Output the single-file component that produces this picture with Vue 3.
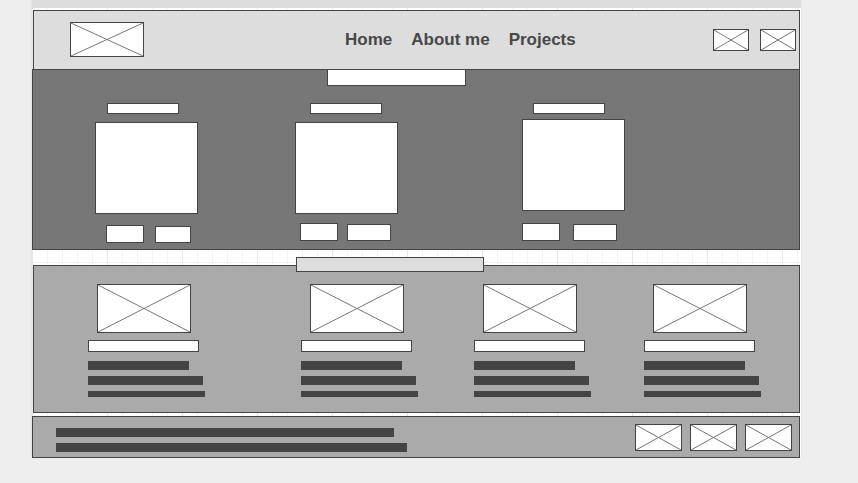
<script setup>
import { h } from 'vue'

const ImageBox = () =>
  h('svg', { viewBox: '0 0 100 100', preserveAspectRatio: 'none', 'aria-hidden': 'true' }, [
    h('path', {
      d: 'M0 0L100 100M0 100L100 0',
      fill: 'none',
      stroke: '#777',
      'stroke-width': 1,
      'vector-effect': 'non-scaling-stroke'
    })
  ])

const links = [
  { label: 'Home', href: '#home' },
  { label: 'About me', href: '#about' },
  { label: 'Projects', href: '#projects' }
]
const projects = ['first', 'second', 'third']
</script>

<template>
  <div class="page">
    <div class="strip"></div>

    <header id="home" class="header">
      <ImageBox class="image logo" />
      <nav class="nav">
        <a v-for="link in links" :key="link.label" :href="link.href">{{ link.label }}</a>
      </nav>
      <div class="social">
        <ImageBox v-for="n in 2" :key="n" class="image social-icon" />
      </div>
    </header>

    <main>
      <section id="projects" class="projects">
        <div class="projects-heading"><div class="projects-tab"></div></div>
        <div class="project-grid">
          <article v-for="name in projects" :key="name" class="project" :class="name">
            <div class="box project-name"></div>
            <div class="box project-preview"></div>
            <div class="actions">
              <button type="button" class="box action" aria-label="Demo"></button>
              <button type="button" class="box action secondary" aria-label="Code"></button>
            </div>
          </article>
        </div>
      </section>

      <section id="about" class="topics">
        <div class="topics-heading"><div class="topics-tab"></div></div>
        <div class="topic-grid">
          <article v-for="n in 4" :key="n" class="topic">
            <ImageBox class="image topic-image" />
            <div class="box topic-name"></div>
            <div class="line short"></div>
            <div class="line medium"></div>
            <div class="line long"></div>
          </article>
        </div>
      </section>
    </main>

    <footer class="footer">
      <div class="footer-text">
        <div class="line footer-first"></div>
        <div class="line footer-second"></div>
      </div>
      <div class="footer-icons">
        <ImageBox v-for="n in 3" :key="n" class="image footer-icon" />
      </div>
    </footer>
  </div>
</template>

<style>
body {
  background: #eee;
}
</style>

<style scoped>
.page,
.page * {
  box-sizing: border-box;
}

.page {
  margin: 0 57px 0 32px;
  padding-right: 1px;
  font-family: "Liberation Sans", Arial, sans-serif;
  background-color: #fff;
  background-image:
    repeating-linear-gradient(to right, #e8e8e8 0 1px, transparent 1px 75px),
    repeating-linear-gradient(to right, #f3f3f3 0 1px, transparent 1px 15px),
    repeating-linear-gradient(to bottom, transparent 0 7px, #f3f3f3 7px 8px, transparent 8px 15px);
  box-shadow: 0 0 2px #ddd;
}

.strip {
  height: 8px;
  margin: 0 -1px 2px 0;
  background: #ddd;
}

.box {
  border: 1px solid #444;
  background: #fff;
}

.image {
  display: block;
  border: 1px solid #444;
  background: #fff;
}

.header {
  display: grid;
  grid-template-columns: 275fr 368fr 83px;
  align-items: center;
  margin-left: 1px;
  padding: 11px 3px 12px 36px;
  border: 1px solid #444;
  border-bottom: 0;
  background: #ddd;
}

.logo {
  width: 74px;
  height: 35px;
}

.nav {
  display: flex;
  gap: 19px;
}

.nav a {
  color: #484848;
  font-size: 17px;
  font-weight: bold;
  line-height: 20px;
  text-decoration: none;
  white-space: nowrap;
}

.social {
  display: flex;
  gap: 11px;
}

.social-icon {
  width: 36px;
  height: 22px;
}

.projects {
  padding-bottom: 6px;
  border: 1px solid #444;
  background: #777;
}

.projects-heading {
  display: grid;
  grid-template-columns: 294fr 139px 333fr;
  margin-bottom: 17px;
}

.projects-tab {
  grid-column: 2;
  height: 16px;
  border: 1px solid #444;
  border-top: 0;
  background: #fff;
}

.project-grid {
  display: grid;
  grid-template-columns: 200fr 227fr 277fr;
  padding-left: 62px;
}

.project-name {
  width: 72px;
  height: 11px;
  margin: 0 0 8px 12px;
}

.project-preview {
  width: 103px;
  height: 92px;
}

.actions {
  display: flex;
  align-items: flex-end;
  gap: 11px;
  margin: 11px 0 0 11px;
}

.action {
  width: 38px;
  height: 18px;
  padding: 0;
  border-radius: 0;
}

.secondary {
  width: 44px;
  height: 17px;
}

.first .secondary {
  width: 36px;
}

.second .project-name {
  margin-left: 15px;
}

.second .actions {
  gap: 9px;
  margin: 9px 0 0 5px;
}

.third .project-name {
  margin: 0 0 5px 11px;
}

.third .actions {
  gap: 13px;
  margin: 12px 0 0;
}

.topics {
  margin: 15px 0 3px 1px;
  padding-bottom: 15px;
  border: 1px solid #444;
  background: #aaa;
}

.topics-heading {
  display: grid;
  grid-template-columns: 262fr 188px 315fr;
  margin: -9px 0 12px;
}

.topics-tab {
  grid-column: 2;
  height: 15px;
  border: 1px solid #444;
  background: #ddd;
}

.topic-grid {
  display: grid;
  grid-template-columns: 213fr 173fr 170fr 155fr;
  padding-left: 54px;
}

.topic-image {
  width: 94px;
  height: 49px;
  margin-left: 9px;
}

.topic-name {
  width: 111px;
  height: 12px;
  margin: 7px 0 9px;
}

.line {
  height: 9px;
  background: #444;
}

.line + .line {
  margin-top: 6px;
}

.short {
  width: 101px;
}

.medium {
  width: 115px;
}

.long {
  width: 117px;
  height: 6px;
}

.footer {
  display: flex;
  justify-content: space-between;
  padding: 7px 7px 5px 23px;
  border: 1px solid #444;
  background: #aaa;
}

.footer-text {
  padding-top: 4px;
}

.footer-first {
  width: 338px;
}

.footer-second {
  width: 351px;
}

.footer-icons {
  display: flex;
  gap: 8px;
}

.footer-icon {
  width: 47px;
  height: 27px;
}
</style>
